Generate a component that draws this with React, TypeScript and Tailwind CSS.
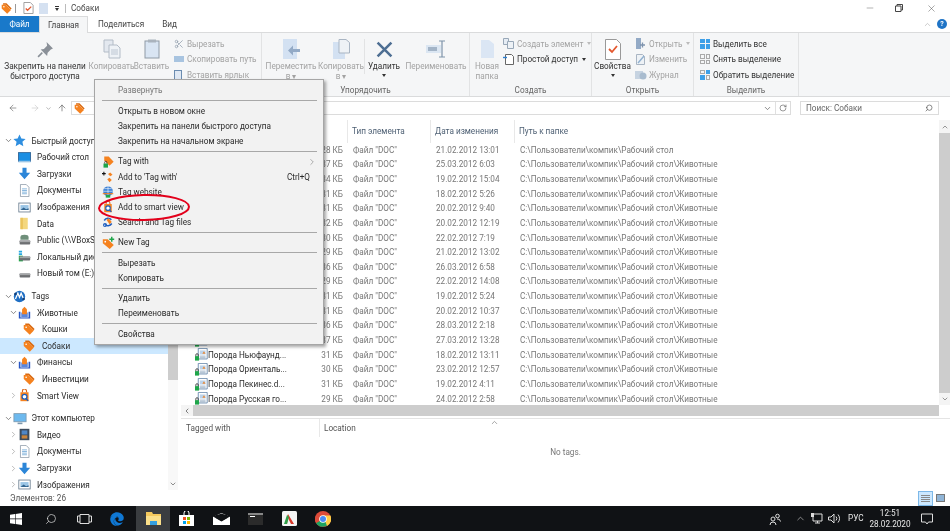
import React from "react";
import { ArrowLeft, ArrowRight, ArrowUp, ChevronDown, ChevronRight, ChevronUp, ChevronLeft, RotateCw, Search, Minus, X, Scissors } from "lucide-react";
import { FaEdge } from "react-icons/fa";

const Tag = ({ s = 12, c = "#f5821f" }: { s?: number; c?: string }) => (
  <svg width={s} height={s} viewBox="0 0 16 16" className="shrink-0">
    <path d="M3 0.5h5l7.5 7.5-1.5 1.5-7-7H3z" fill="#d96a12" />
    <path d="M1 2.5h6l7.5 7.5-5.5 5.5L1 8z" fill={c} />
    <circle cx="4.2" cy="5.6" r="1.1" fill="#fff" />
  </svg>
);
const Doc = ({ s = 13 }: { s?: number }) => (
  <svg width={s} height={s} viewBox="0 0 16 16" className="shrink-0">
    <path d="M4 .5h11v13H4z" fill="#fff" stroke="#5b7fa5" />
    <rect x="6" y="3" width="7" height="5" fill="#bcd3ea" />
    <path d="M9 7l2-3 2 3z" fill="#e88a3a" />
    <path d="M6 10h7M6 12h7" stroke="#8aa3bd" />
    <rect x="0" y="10" width="5" height="5.5" fill="#1fa64a" />
    <path d="M1 10V8.5a1.5 1.5 0 013 0V10" fill="none" stroke="#333" />
  </svg>
);
const Desktop = () => (
  <svg width="13" height="13" viewBox="0 0 16 16"><rect x="0.5" y="2" width="15" height="11" fill="#1b8fe3" stroke="#2a5d8f" /><rect x="0.5" y="12" width="15" height="2" fill="#9cc6e6" /></svg>
);
const Download = () => (
  <svg width="13" height="13" viewBox="0 0 16 16"><path d="M5.5 1h5v6H15l-7 8-7-8h4.5z" fill="#2c86d8" /></svg>
);
const Documents = () => (
  <svg width="13" height="13" viewBox="0 0 16 16"><path d="M3 .5h7l3.5 3.5v11.5H3z" fill="#fff" stroke="#8d9aa8" /><path d="M5 6h6M5 8h6M5 10h6M5 12h6" stroke="#6fa8d6" /></svg>
);
const Pictures = () => (
  <svg width="13" height="13" viewBox="0 0 16 16"><rect x="1" y="2.5" width="14" height="11" fill="#fff" stroke="#65798c" /><path d="M3 5h10v6H3z" fill="#9cc6e6" /><path d="M3 11l4-3 3 2 3-1v2z" fill="#33658f" /></svg>
);
const Folder = () => (
  <svg width="13" height="13" viewBox="0 0 16 16"><path d="M3 1h9v14H3z" fill="#f4d77e" /><path d="M3 1h3v14H3z" fill="#eac35b" /></svg>
);
const Drive = ({ net, local }: { net?: boolean; local?: boolean }) => (
  <svg width="13" height="13" viewBox="0 0 16 16">
    {net && <path d="M3 4a5 3 0 0110 0v3H3z" fill="#6f8f7a" />}
    {local && <path d="M1 1h4v2H1zM1 4h4v2H1z" fill="#27a8e0" />}
    {local && <rect x="1" y="7" width="5" height="7" fill="#23a84a" />}
    <rect x="2" y="8" width="13" height="5" rx="1" fill="#6d6f72" />
    <rect x="2" y="8" width="13" height="2" fill="#a5a7a9" />
  </svg>
);
const TagsLogo = () => (
  <svg width="13" height="13" viewBox="0 0 16 16"><circle cx="8" cy="8" r="7" fill="#1f6fc4" /><path d="M3 11l3-7 2 5 2-5 3 7" fill="none" stroke="#fff" strokeWidth="1.6" /><circle cx="3" cy="5" r="1.6" fill="#123f78" /><circle cx="13" cy="11" r="1.6" fill="#123f78" /></svg>
);
const TagFolder = () => (
  <svg width="13" height="13" viewBox="0 0 16 16"><path d="M1 7h2v7h10V7h2v8.5H1z" fill="#2a57c2" /><path d="M4 8h8v6H4z" fill="#5b86dd" /><path d="M8 1l3 3v6H5V4z" fill="#f5821f" /></svg>
);
const SmartView = ({ s = 13 }: { s?: number }) => (
  <svg width={s} height={s} viewBox="0 0 16 16"><path d="M3 4h10v11H3z" fill="#f5821f" /><path d="M5.500 4V2.500a2.500 2.500 0 015 0V4" fill="none" stroke="#d9651a" strokeWidth="1.400" /><circle cx="8" cy="9.500" r="3" fill="#fff" stroke="#1a5fc0" strokeWidth="1.500" /><path d="M10 12l2.500 2.500" stroke="#1a5fc0" strokeWidth="1.600" /></svg>
);
const Computer = () => (
  <svg width="14" height="13" viewBox="0 0 16 16"><rect x="0.5" y="2" width="15" height="10" fill="#6db9ee" stroke="#7d98ad" /><path d="M5 14h6" stroke="#7d98ad" strokeWidth="2" /></svg>
);
const Video = () => (
  <svg width="13" height="13" viewBox="0 0 16 16"><rect x="2" y="1" width="12" height="14" fill="#3c4a5c" /><rect x="4.500" y="3" width="7" height="5" fill="#4f86c6" /><rect x="4.500" y="9" width="7" height="4" fill="#c9843c" /></svg>
);

const Chev = ({ open }: { open?: boolean }) =>
  open ? <ChevronDown size={9} strokeWidth={2} className="text-[#666]" /> : <ChevronRight size={9} strokeWidth={2} className="text-[#a6a6a6]" />;

type TreeItem = { t: string; l: 0 | 1 | 2; icon: React.ReactNode; open?: boolean; leaf?: boolean; sel?: boolean; gap?: boolean };
const tree: TreeItem[] = [
  { t: "Быстрый доступ", l: 0, open: true, icon: <svg width="13" height="13" viewBox="0 0 16 16"><path d="M8 .5l2.300 5 5.200.6-3.900 3.500 1.100 5.400L8 12.300 3.300 15l1.100-5.400L.5 6.100l5.200-.6z" fill="#2f8fe0" /></svg> },
  { t: "Рабочий стол", l: 1, leaf: true, icon: <Desktop /> },
  { t: "Загрузки", l: 1, leaf: true, icon: <Download /> },
  { t: "Документы", l: 1, leaf: true, icon: <Documents /> },
  { t: "Изображения", l: 1, leaf: true, icon: <Pictures /> },
  { t: "Data", l: 1, leaf: true, icon: <Folder /> },
  { t: "Public (\\\\VBoxSvr) (Z:)", l: 1, leaf: true, icon: <Drive net /> },
  { t: "Локальный диск (C:)", l: 1, leaf: true, icon: <Drive local /> },
  { t: "Новый том (E:)", l: 1, leaf: true, icon: <Drive /> },
  { t: "Tags", l: 0, open: true, gap: true, icon: <TagsLogo /> },
  { t: "Животные", l: 1, open: true, icon: <TagFolder /> },
  { t: "Кошки", l: 2, icon: <Tag /> },
  { t: "Собаки", l: 2, sel: true, icon: <Tag /> },
  { t: "Финансы", l: 1, open: true, icon: <TagFolder /> },
  { t: "Инвестиции", l: 2, icon: <Tag /> },
  { t: "Smart View", l: 1, icon: <SmartView /> },
  { t: "Этот компьютер", l: 0, open: true, gap: true, icon: <Computer /> },
  { t: "Видео", l: 1, icon: <Video /> },
  { t: "Документы", l: 1, icon: <Documents /> },
  { t: "Загрузки", l: 1, icon: <Download /> },
  { t: "Изображения", l: 1, icon: <Pictures /> },
];

const rows: [string, string, string, boolean?][] = [
  ["Порода Акита-ину.doc", "28", "21.02.2012 13:01", true],
  ["Порода Бигль.doc", "37", "25.03.2012 6:03"],
  ["Порода Боксёр.doc", "34", "19.02.2012 15:04"],
  ["Порода Бульдог.doc", "31", "18.02.2012 5:26"],
  ["Порода Далматин.doc", "31", "20.02.2012 9:40"],
  ["Порода Доберман.doc", "32", "20.02.2012 12:19"],
  ["Порода Колли.doc", "30", "22.02.2012 7:19"],
  ["Порода Лайка.doc", "29", "21.02.2012 13:02"],
  ["Порода Мопс.doc", "36", "26.03.2012 6:58"],
  ["Порода Овчарка.doc", "29", "22.02.2012 14:08"],
  ["Порода Пудель.doc", "31", "19.02.2012 5:24"],
  ["Порода Ротвейлер.doc", "31", "20.02.2012 10:37"],
  ["Порода Сеттер.doc", "36", "28.03.2012 2:18"],
  ["Порода Такса.doc", "37", "27.03.2012 13:28"],
  ["Порода Ньюфаунд...", "31", "18.02.2012 13:11"],
  ["Порода Ориенталь...", "30", "23.02.2012 12:57"],
  ["Порода Пекинес.d...", "31", "19.02.2012 4:11"],
  ["Порода Русская го...", "29", "24.02.2012 2:58"],
];

const BigBtn = ({ w, icon, a, b, on, arrow }: { w: string; icon: React.ReactNode; a: string; b?: string; on?: boolean; arrow?: boolean }) => (
  <div className={`${w} shrink-0 flex flex-col items-center`}>
    <div className="h-[26px] flex items-center justify-center">{icon}</div>
    <div className={`text-center leading-[9.5px] whitespace-nowrap ${on ? "text-[#333]" : "text-[#a3a3a3]"}`}>{a}</div>
    {b && <div className={`text-center leading-[9.5px] whitespace-nowrap ${on ? "text-[#333]" : "text-[#a3a3a3]"}`}>{b}</div>}
    {arrow && <div className="mt-[2px] w-0 h-0 border-x-[2.5px] border-x-transparent border-t-[3px] border-t-[#333]" />}
  </div>
);
const Small = ({ icon, t, on, arrow, cls = "w-[13px]" }: { icon: React.ReactNode; t: string; on?: boolean; arrow?: string; cls?: string }) => (
  <div className="h-[15.5px] flex items-center whitespace-nowrap">
    <div className={`${cls} shrink-0 flex items-center`}>{icon}</div>
    <span className={on ? "text-[#333]" : "text-[#a3a3a3]"}>{t}</span>
    {arrow && <span className="ml-[4px] w-0 h-0 border-x-[2.5px] border-x-transparent border-t-[3px]" style={{ borderTopColor: arrow }} />}
  </div>
);
const Group = ({ w, label, children }: { w: string; label?: string; children: React.ReactNode }) => (
  <div className={`${w} shrink-0 flex flex-col border-r border-[#e2e3e4] h-full`}>
    <div className="flex-1 flex items-start pt-[3px] min-h-0">{children}</div>
    <div className="h-[11px] text-center text-[#666] leading-[10px]">{label}</div>
  </div>
);
const Sq = ({ c, o }: { c: string; o?: boolean }) => <div className={`w-[4.5px] h-[4.5px] ${o ? "border border-[#aaa]" : ""}`} style={o ? undefined : { background: c }} />;
const Grid4 = ({ kind }: { kind: "all" | "none" | "inv" }) => (
  <div className="grid grid-cols-2 gap-[1px] w-[10px]">
    {kind === "all" && ["#3ea0e8", "#3ea0e8", "#3ea0e8", "#3ea0e8"].map((c, i) => <Sq key={i} c={c} />)}
    {kind === "none" && [0, 1, 2, 3].map((i) => <Sq key={i} c="" o />)}
    {kind === "inv" && [0, 1, 2, 3].map((i) => (i === 1 || i === 2 ? <Sq key={i} c="#3ea0e8" /> : <Sq key={i} c="" o />))}
  </div>
);

const MenuSep = () => (
  <div className="h-[5.1px] flex items-center px-[6.5px]"><div className="h-px w-full bg-[#a8a8a8]" /></div>
);
const MenuItem = ({ t, dim, icon, right }: { t: string; dim?: boolean; icon?: React.ReactNode; right?: React.ReactNode }) => (
  <div className={`h-[15.2px] flex items-center ${dim ? "text-[#777]" : "text-[#2a2a2a]"}`}>
    <div className="w-[23px] pl-[7px] shrink-0 flex items-center">{icon}</div>
    <span className="flex-1 whitespace-nowrap">{t}</span>
    {right}
  </div>
);
const TagWith = () => (
  <svg width="12" height="12" viewBox="0 0 16 16"><path d="M3 .5h6l6.500 7-5.500 5.500L3 6z" fill="#f5821f" /><rect x="2" y="10" width="6" height="5.500" fill="#1fa64a" /><path d="M3.500 10V8.500a1.500 1.500 0 013 0V10" fill="none" stroke="#333" /></svg>
);
const AddTagWith = () => (
  <svg width="12" height="12" viewBox="0 0 16 16"><path d="M0 3.500h5M2.500 1v5" stroke="#111" strokeWidth="1.400" /><path d="M8 4l3-2 3 3-3 2z" fill="#f5821f" /><path d="M7 11l3-2 3 3-3 3z" fill="#f5821f" /></svg>
);
const Globe = () => (
  <svg width="12" height="12" viewBox="0 0 16 16"><circle cx="8" cy="7" r="6.500" fill="#3a7fd5" /><path d="M1.500 7h13M8 .5v13M3 3.500h10" stroke="#fff" strokeWidth=".8" /><path d="M1 9.500h14v1.500H1z" fill="#f5821f" /><rect x="5" y="12" width="6" height="3.500" fill="#1fa64a" /></svg>
);
const SearchTag = () => (
  <svg width="12" height="12" viewBox="0 0 16 16"><path d="M12.500 5A6 6 0 003 6M3.500 11A6 6 0 0013 10" fill="none" stroke="#1f5fc0" strokeWidth="2" /><path d="M6 5l3-2 4 5-3 3z" fill="#f5821f" /><circle cx="4" cy="12" r="2" fill="none" stroke="#1f5fc0" strokeWidth="1.400" /></svg>
);
const NewTag = () => (
  <svg width="13" height="13" viewBox="0 0 16 16"><path d="M1 4h6l7.500 7-5 5L1 9z" fill="#f5821f" /><circle cx="4" cy="7" r="1.100" fill="#fff" /><path d="M9 4h6M12 1v6" stroke="#1fa64a" strokeWidth="1.800" /></svg>
);

export default function App() {
  return (
    <div className="relative w-[950px] h-[531px] overflow-hidden bg-white flex flex-col text-[8.2px] text-[#333] font-['Roboto',sans-serif] blur-[0.3px]">
      {/* title */}
      <div className="h-[16px] flex items-center shrink-0">
        <div className="ml-[1px] w-[14px]"><Tag s={11} /></div>
        <div className="w-px h-[9px] bg-[#999]" />
        <div className="ml-[7px]">
          <svg width="11" height="12" viewBox="0 0 12 13"><path d="M1 .5h7l3 3v9H1z" fill="#fff" stroke="#999" /><path d="M3 7l2 2 4-4" fill="none" stroke="#e4572e" strokeWidth="1.400" /></svg>
        </div>
        <div className="ml-[5px] w-[9px] h-[11px] bg-[#d5e1f1]" />
        <div className="ml-[7px] flex flex-col items-center gap-[1px]"><div className="w-[4px] h-px bg-[#333]" /><div className="w-0 h-0 border-x-[2.5px] border-x-transparent border-t-[3px] border-t-[#333]" /></div>
        <div className="ml-[6px] w-px h-[9px] bg-[#bbb]" />
        <span className="ml-[5px] text-[#444]">Собаки</span>
        <div className="ml-auto flex items-center text-[#444]">
          <Minus size={10} strokeWidth={1} className="mr-[20px]" />
          <svg width="8" height="8" viewBox="0 0 8 8" className="mr-[23px]"><path d="M.5 2h5.500v5.500H.5zM2 2V.5h5.500V6H6" fill="none" stroke="#444" /></svg>
          <X size={11} strokeWidth={1} className="mr-[13px]" />
        </div>
      </div>
      {/* tabs */}
      <div className="h-[16px] flex items-stretch shrink-0 relative z-10">
        <div className="w-[39px] bg-[#1979ca] text-white flex items-center justify-center">Файл</div>
        <div className="w-[49px] h-[17px] bg-[#f5f6f7] border-x border-t border-[#dadbdc] flex items-center justify-center text-[#444]">Главная</div>
        <div className="ml-[10px] flex items-center text-[#444]">Поделиться</div>
        <div className="ml-[18px] flex items-center text-[#444]">Вид</div>
        <div className="ml-auto flex items-center">
          <ChevronUp size={9} className="text-[#bbb] mr-[5px]" />
          <div className="w-[10px] h-[10px] rounded-full bg-[#1f74c6] text-white text-[7px] font-bold flex items-center justify-center mr-[3px]">?</div>
        </div>
      </div>
      {/* ribbon */}
      <div className="h-[65px] shrink-0 bg-[#f5f6f7] border-y border-[#dadbdc] flex">
        <Group w="w-[262px]">
          <BigBtn w="w-[88px] ml-[1px]" on a="Закрепить на панели" b="быстрого доступа" icon={<svg width="17" height="17" viewBox="0 0 16 16"><path d="M9 1l6 6-2 1-3 3-.5 3-6-6 3-.5 3-3z" fill="#8a9098" /><path d="M5 11l-4 4" stroke="#8a9098" strokeWidth="1.500" /></svg>} />
          <BigBtn w="w-[45px]" a="Копировать" icon={<svg width="18" height="20" viewBox="0 0 18 20"><path d="M1 1h9v12H1z" fill="#e3e8ef" stroke="#b3bcc7" /><path d="M6 6h8l3 3v10H6z" fill="#eef2f6" stroke="#b3bcc7" /><path d="M8 11h7M8 13h7M8 15h7" stroke="#bcc6d2" /></svg>} />
          <BigBtn w="w-[35px]" a="Вставить" icon={<svg width="16" height="20" viewBox="0 0 16 20"><rect x="1" y="2" width="14" height="17" fill="#d9e5f3" stroke="#8f9aa6" /><rect x="4" y="0.500" width="8" height="3" fill="#aab3bd" /></svg>} />
          <div className="ml-[5px] flex flex-col">
            <Small cls="w-[13px]" icon={<Scissors size={10} className="text-[#9aa6b3]" />} t="Вырезать" />
            <Small cls="w-[13px]" icon={<div className="w-[10px] h-[6px] bg-[#a8c4e0]" />} t="Скопировать путь" />
            <Small cls="w-[13px]" icon={<div className="w-[8px] h-[10px] border border-[#6b8cb0] bg-[#dfe8f3]" />} t="Вставить ярлык" />
          </div>
        </Group>
        <Group w="w-[208px]" label="Упорядочить">
          <BigBtn w="w-[54px] ml-[2px]" a="Переместить" b="в ▾" icon={<svg width="17" height="21" viewBox="0 0 17 21"><rect x="0" y="0" width="14" height="20" fill="#d3e1f2" /><path d="M17 10H10V6.500L5 11.500l5 5V13h7z" fill="#93aac6" /></svg>} />
          <BigBtn w="w-[46px]" a="Копировать" b="в ▾" icon={<svg width="17" height="20" viewBox="0 0 17 20"><rect x="0" y="3" width="12" height="17" fill="#d3e1f2" /><path d="M6 .5h7l3.500 3V14H6z" fill="#eef2f6" stroke="#a9b5c3" /></svg>} />
          <div className="w-px h-[35px] bg-[#e2e3e4] mt-[3px]" />
          <BigBtn w="w-[38px]" on a="Удалить" arrow icon={<svg width="17" height="17" viewBox="0 0 16 16"><path d="M1.500 1.500l13 13M14.500 1.500l-13 13" stroke="#4e6f93" strokeWidth="2.400" /></svg>} />
          <BigBtn w="w-[62px] ml-[2px]" a="Переименовать" icon={<svg width="20" height="18" viewBox="0 0 20 18"><rect x="0" y="5" width="15" height="8" fill="#dbe6f2" /><rect x="2" y="7" width="9" height="4" fill="#a3b4c7" /><path d="M13 1h6M16 1v16M13 17h6" stroke="#7e93aa" strokeWidth="1.200" fill="none" /></svg>} />
        </Group>
        <Group w="w-[122px]" label="Создать">
          <BigBtn w="w-[32px] ml-[1px]" a="Новая" b="папка" icon={<svg width="13" height="18" viewBox="0 0 13 18"><path d="M0 0h8l5 4v14H0z" fill="#dbe6f4" /></svg>} />
          <div className="flex flex-col">
            <Small cls="w-[14px]" arrow="#bbb" icon={<svg width="11" height="11" viewBox="0 0 11 11"><path d="M.5.5h5v6h-5z" fill="#e6edf5" stroke="#99a8b8" /><path d="M4.500 3.500h6v7h-6z" fill="#eef2f6" stroke="#99a8b8" /></svg>} t="Создать элемент" />
            <Small cls="w-[14px]" on arrow="#333" icon={<svg width="11" height="11" viewBox="0 0 11 11"><path d="M2.500.5h6l2 2v8h-8z" fill="#fff" stroke="#666" /><path d="M0 3.500h4" stroke="#2c7fd0" strokeWidth="1.400" /></svg>} t="Простой доступ" />
          </div>
        </Group>
        <Group w="w-[102px]" label="Открыть">
          <BigBtn w="w-[41px]" on a="Свойства" arrow icon={<svg width="16" height="21" viewBox="0 0 16 21"><path d="M.5.5h11l4 4v16H.5z" fill="#fff" stroke="#999" /><path d="M4 10l3 3 5-6" fill="none" stroke="#e4572e" strokeWidth="1.800" /></svg>} />
          <div className="ml-[2px] flex flex-col">
            <Small cls="w-[14px]" arrow="#bbb" icon={<svg width="11" height="11" viewBox="0 0 11 11"><path d="M1 0h5v11H1z" fill="#93aac6" /><path d="M5 7h5M7.500 4.500v5" stroke="#7d93ad" strokeWidth="1.300" /></svg>} t="Открыть" />
            <Small cls="w-[14px]" icon={<svg width="11" height="11" viewBox="0 0 11 11"><path d="M1.500.5h6l2 2v8h-8z" fill="#eef2f6" stroke="#a9b5c3" /><path d="M3 9l6-7" stroke="#8fb0d0" strokeWidth="1.400" /></svg>} t="Изменить" />
            <Small cls="w-[14px]" icon={<svg width="12" height="11" viewBox="0 0 12 11"><path d="M0 2h8v8H0z" fill="#c6d3e1" /><circle cx="8" cy="7" r="3.500" fill="#a9bccf" /></svg>} t="Журнал" />
          </div>
        </Group>
        <Group w="w-[105px]" label="Выделить">
          <div className="ml-[6px] flex flex-col">
            <Small on cls="w-[13px]" icon={<Grid4 kind="all" />} t="Выделить все" />
            <Small on cls="w-[13px]" icon={<Grid4 kind="none" />} t="Снять выделение" />
            <Small on cls="w-[13px]" icon={<Grid4 kind="inv" />} t="Обратить выделение" />
          </div>
        </Group>
      </div>
      {/* nav */}
      <div className="h-[23px] shrink-0 flex items-start pt-[4px]">
        <ArrowLeft size={10} className="ml-[8px] mt-[2px] text-[#666]" strokeWidth={1.500} />
        <ArrowRight size={10} className="ml-[12px] mt-[2px] text-[#c8c8c8]" strokeWidth={1.500} />
        <ChevronDown size={7} className="ml-[5px] mt-[4px] text-[#888]" />
        <ArrowUp size={10} className="ml-[5px] mt-[2px] text-[#555]" strokeWidth={1.500} />
        <div className="ml-[4px] w-[720px] h-[14px] border border-[#dcdcdc] flex items-center pl-[2px]">
          <Tag s={11} />
          <div className="flex-1" />
          <ChevronDown size={9} className="text-[#666] mr-[3px]" />
          <div className="w-px h-full bg-[#e0e0e0]" />
          <RotateCw size={8} className="mx-[3px] text-[#666]" />
        </div>
        <div className="ml-[9px] w-[139px] h-[14px] border border-[#dcdcdc] flex items-center justify-between px-[5px] text-[#666]">
          <span>Поиск: Собаки</span>
          <Search size={8} className="text-[#555] -scale-x-100" />
        </div>
      </div>
      {/* main */}
      <div className="flex-1 flex min-h-0">
        <div className="w-[168px] shrink-0 pt-[12.5px] overflow-hidden">
          {tree.map((r, i) => (
            <div key={i} className={`h-[16.6px] flex items-center whitespace-nowrap text-[#2a2a2a] ${r.gap ? "mt-[6px]" : ""} ${r.sel ? "bg-[#cce8ff]" : ""} ${r.l === 0 ? "pl-[3px]" : r.l === 1 ? "pl-[8px]" : "pl-[23px]"}`}>
              {r.l !== 2 && <div className="w-[10px] flex justify-center">{!r.leaf && <Chev open={r.open} />}</div>}
              <div className={`${r.l === 0 ? "w-[18.5px]" : "w-[19px]"} flex items-center`}>{r.icon}</div>
              <span>{r.t}</span>
            </div>
          ))}
        </div>
        <div className="w-[10px] shrink-0 flex flex-col bg-[#f8f8f8] items-center">
          <div className="h-[10px]" />
          <div className="w-full h-[250px] bg-[#cdcdcd]" />
          <div className="flex-1" />
          <ChevronDown size={8} className="text-[#555] mb-[2px]" />
        </div>
        <div className="w-[3px] shrink-0" />
        <div className="flex-1 flex flex-col min-w-0">
          <div className="h-[285px] flex shrink-0">
            <div className="flex-1 min-w-0 overflow-hidden">
              <div className="h-[22.5px] flex items-center text-[#4d5f73]">
                <div className="w-[167px] h-full border-r border-[#e8e8e8]" />
                <div className="w-[83px] h-full pl-[4px] flex items-center border-r border-[#e8e8e8]">Тип элемента</div>
                <div className="w-[84px] h-full pl-[4px] flex items-center border-r border-[#e8e8e8]">Дата изменения</div>
                <div className="pl-[4px]">Путь к папке</div>
              </div>
              {rows.map((r, i) => (
                <div key={i} className="h-[14.65px] flex items-center whitespace-nowrap text-[#777]">
                  <div className="w-[139px] pl-[14px] flex items-center text-[#2a2a2a] overflow-hidden shrink-0">
                    <Doc />
                    <span>{r[0]}</span>
                  </div>
                  <div className="w-[23px] text-right shrink-0">{r[1]} КБ</div>
                  <div className="w-[10px] shrink-0" />
                  <div className="w-[83px] shrink-0">Файл "DOC"</div>
                  <div className="w-[84px] shrink-0">{r[2]}</div>
                  <div>{r[3] ? "C:\\Пользователи\\компик\\Рабочий стол" : "C:\\Пользователи\\компик\\Рабочий стол\\Животные"}</div>
                </div>
              ))}
            </div>
            <div className="w-[11px] shrink-0 flex flex-col items-center bg-[#f4f4f4]">
              <div className="h-[13px] flex items-center"><ChevronUp size={8} className="text-[#666]" /></div>
              <div className="w-full flex-1 bg-[#cdcdcd]" />
              <div className="h-[12px] flex items-center"><ChevronDown size={8} className="text-[#666]" /></div>
            </div>
          </div>
          <div className="h-[11px] shrink-0 flex pr-[11px]">
            <div className="w-[12px] flex items-center justify-center bg-[#f4f4f4]"><ChevronLeft size={8} className="text-[#444]" /></div>
            <div className="flex-1 bg-[#cdcdcd]" />
          </div>
          <div className="mt-[2px] flex-1 border-t border-[#e4e4e4] flex flex-col relative">
            <ChevronUp size={9} className="absolute left-[309px] top-[-1px] text-[#888]" />
            <div className="h-[18px] flex items-center text-[#555]">
              <div className="w-[139px] pl-[5px] h-full flex items-center border-r border-[#e8e8e8]">Tagged with</div>
              <div className="pl-[4px]">Location</div>
            </div>
            <div className="flex-1 flex items-start justify-center pt-[9px] text-[#777]">No tags.</div>
          </div>
        </div>
      </div>
      {/* status */}
      <div className="h-[16px] shrink-0 flex items-center pl-[10px] text-[#555]">
        <span>Элементов: 26</span>
        <div className="ml-auto flex items-center mr-[5px]">
          <div className="w-[15px] h-[15px] bg-[#cce8ff] border border-[#7db8e8] flex flex-col justify-center gap-[1px] px-[2px]">
            <div className="h-px bg-[#888]" /><div className="h-px bg-[#888]" /><div className="h-px bg-[#888]" /><div className="h-px bg-[#888]" />
          </div>
          <div className="ml-[3px] w-[9px] h-[8px] bg-[#8fb4d6] border border-[#777]" />
        </div>
      </div>
      {/* taskbar */}
      <div className="h-[25px] shrink-0 bg-[#101215] flex items-center text-white">
        <div className="w-[136px] flex items-center">
          <div className="w-[32px] flex justify-center">
            <svg width="12" height="12" viewBox="0 0 12 12"><path d="M0 1.700L5 1v4.600H0zM5.600.9L12 0v5.600H5.600zM0 6.200h5v4.700L0 10.300zM5.600 6.200H12V12l-6.400-.9z" fill="#fff" /></svg>
          </div>
          <div className="w-[38px] flex justify-center"><Search size={12} strokeWidth={1.300} className="-scale-x-100 text-[#eee]" /></div>
          <div className="w-[28px] flex justify-center">
            <svg width="15" height="10" viewBox="0 0 15 10"><path d="M3 .5h9v9H3zM3 2H.5v6H3M12 2h2.500v6H12" fill="none" stroke="#ddd" /></svg>
          </div>
          <div className="w-[38px] flex justify-center"><FaEdge size={14} className="text-[#0f78d4]" /></div>
        </div>
        <div className="w-[34px] h-full bg-[#3a3d40] flex items-center justify-center">
          <svg width="15" height="13" viewBox="0 0 15 13"><path d="M0 0h6l1 2h8v11H0z" fill="#f4c95d" /><path d="M0 4h15v9H0z" fill="#fbe08a" /><path d="M4 9h7v4H4z" fill="#35a0e0" /></svg>
        </div>
        <div className="w-[33px] flex justify-center">
          <svg width="15" height="15" viewBox="0 0 15 15"><path d="M0 4h15v11H0z" fill="#fff" /><path d="M5 4V2a2.500 2.500 0 015 0v2" fill="none" stroke="#fff" /><rect x="4" y="6" width="3" height="3" fill="#f25022" /><rect x="8" y="6" width="3" height="3" fill="#7fba00" /><rect x="4" y="10" width="3" height="3" fill="#00a4ef" /><rect x="8" y="10" width="3" height="3" fill="#ffb900" /></svg>
        </div>
        <div className="w-[36px] flex justify-center">
          <svg width="17" height="12" viewBox="0 0 17 12"><path d="M0 4L8.500 0 17 4v8H0z" fill="#fff" /><path d="M0 3.500l8.500 5 8.500-5-8.500-3z" fill="#101215" /><path d="M3 5V2h11v3l-5.500 3z" fill="#101215" /></svg>
        </div>
        <div className="w-[32px] flex justify-center">
          <div className="w-[15px] h-[12px] bg-[#2b2b2b] border-t-2 border-[#888] flex items-start pl-[2px] pt-[1px]"><div className="w-[5px] h-px bg-white" /></div>
        </div>
        <div className="w-[36px] flex justify-center">
          <svg width="15" height="15" viewBox="0 0 15 15"><rect width="15" height="15" rx="1.500" fill="#f4f4f4" /><path d="M3 13L6 3l6 10H9L6 7l-1 6z" fill="#d93a2b" /><path d="M2 13l3-9 2 2-2 7z" fill="#2f9e48" /></svg>
        </div>
        <div className="w-[32px] flex justify-center">
          <svg width="16" height="16" viewBox="0 0 16 16"><circle cx="8" cy="8" r="8" fill="#dd4b39" /><path d="M8 8L1 12a8 8 0 0012.500 1.500z" fill="#1da462" /><path d="M8 4.500h7.400A8 8 0 0112 15z" fill="#ffcd46" /><path d="M8 8L1 12A8 8 0 012 3l4 5z" fill="#dd4b39" /><circle cx="8" cy="8" r="3.800" fill="#fff" /><circle cx="8" cy="8" r="3" fill="#4a8bf5" /></svg>
        </div>
        <div className="ml-auto flex items-center text-[#e8e8e8]">
          <svg width="12" height="12" viewBox="0 0 12 12" className="mr-[13.5px]"><circle cx="4" cy="6" r="2" fill="none" stroke="#ddd" /><path d="M1 12a3 3 0 016 0" fill="none" stroke="#ddd" /><circle cx="8.500" cy="3" r="1.800" fill="none" stroke="#ddd" /><path d="M8 6a3 3 0 013.500 2.500" fill="none" stroke="#ddd" /></svg>
          <ChevronUp size={11} strokeWidth={1.200} className="mr-[5.5px]" />
          <svg width="12" height="11" viewBox="0 0 12 11" className="mr-[4.5px]"><path d="M2 1h9v7H2zM4 10h5M6.500 8v2" fill="none" stroke="#ddd" /><path d="M0 0h3v4H0z" fill="#ddd" /></svg>
          <svg width="13" height="11" viewBox="0 0 13 11" className="mr-[7.5px]"><path d="M.5 4H3l3-3v9L3 7H.5zM8 3.500a3 3 0 010 4M10 1.500a6 6 0 010 8" fill="none" stroke="#ddd" /></svg>
          <span className="w-[14px] mr-[8px] whitespace-nowrap">РУС</span>
          <div className="flex flex-col items-center leading-[11px] w-[40px] mr-[11px]">
            <span>12:51</span>
            <span>28.02.2020</span>
          </div>
          <svg width="12" height="12" viewBox="0 0 12 12" className="mr-[17px]"><path d="M.5 1h11v8H7.500L6 11 4.500 9H.5z" fill="none" stroke="#ddd" /></svg>
        </div>
      </div>

      {/* context menu */}
      <div className="absolute left-[94px] top-[79px] w-[230px] h-[266px] bg-[#f2f2f2] border border-[#a6a6a6] shadow-[2px_2px_3px_rgba(0,0,0,0.35)] pt-[3px]">
        <MenuItem dim t="Развернуть" />
        <MenuSep />
        <MenuItem t="Открыть в новом окне" />
        <MenuItem t="Закрепить на панели быстрого доступа" />
        <MenuItem t="Закрепить на начальном экране" />
        <MenuSep />
        <MenuItem t="Tag with" icon={<TagWith />} right={<ChevronRight size={10} strokeWidth={1.200} className="mr-[6px] text-[#666]" />} />
        <MenuItem t="Add to 'Tag with'" icon={<AddTagWith />} right={<span className="mr-[13px]">Ctrl+Q</span>} />
        <MenuItem t="Tag website" icon={<Globe />} />
        <MenuItem t="Add to smart view" icon={<SmartView s={12} />} />
        <MenuItem t="Search and Tag files" icon={<SearchTag />} />
        <MenuSep />
        <MenuItem t="New Tag" icon={<NewTag />} />
        <MenuSep />
        <MenuItem t="Вырезать" />
        <MenuItem t="Копировать" />
        <MenuSep />
        <MenuItem t="Удалить" />
        <MenuItem t="Переименовать" />
        <MenuSep />
        <MenuItem t="Свойства" />
      </div>
      {/* red annotation */}
      <svg className="absolute left-[96px] top-[192px]" width="96" height="32" viewBox="0 0 96 32">
        <ellipse cx="48" cy="15.500" rx="45" ry="12.500" fill="none" stroke="#e3001b" strokeWidth="2" transform="rotate(-1 48 15.500)" />
      </svg>
    </div>
  );
}
